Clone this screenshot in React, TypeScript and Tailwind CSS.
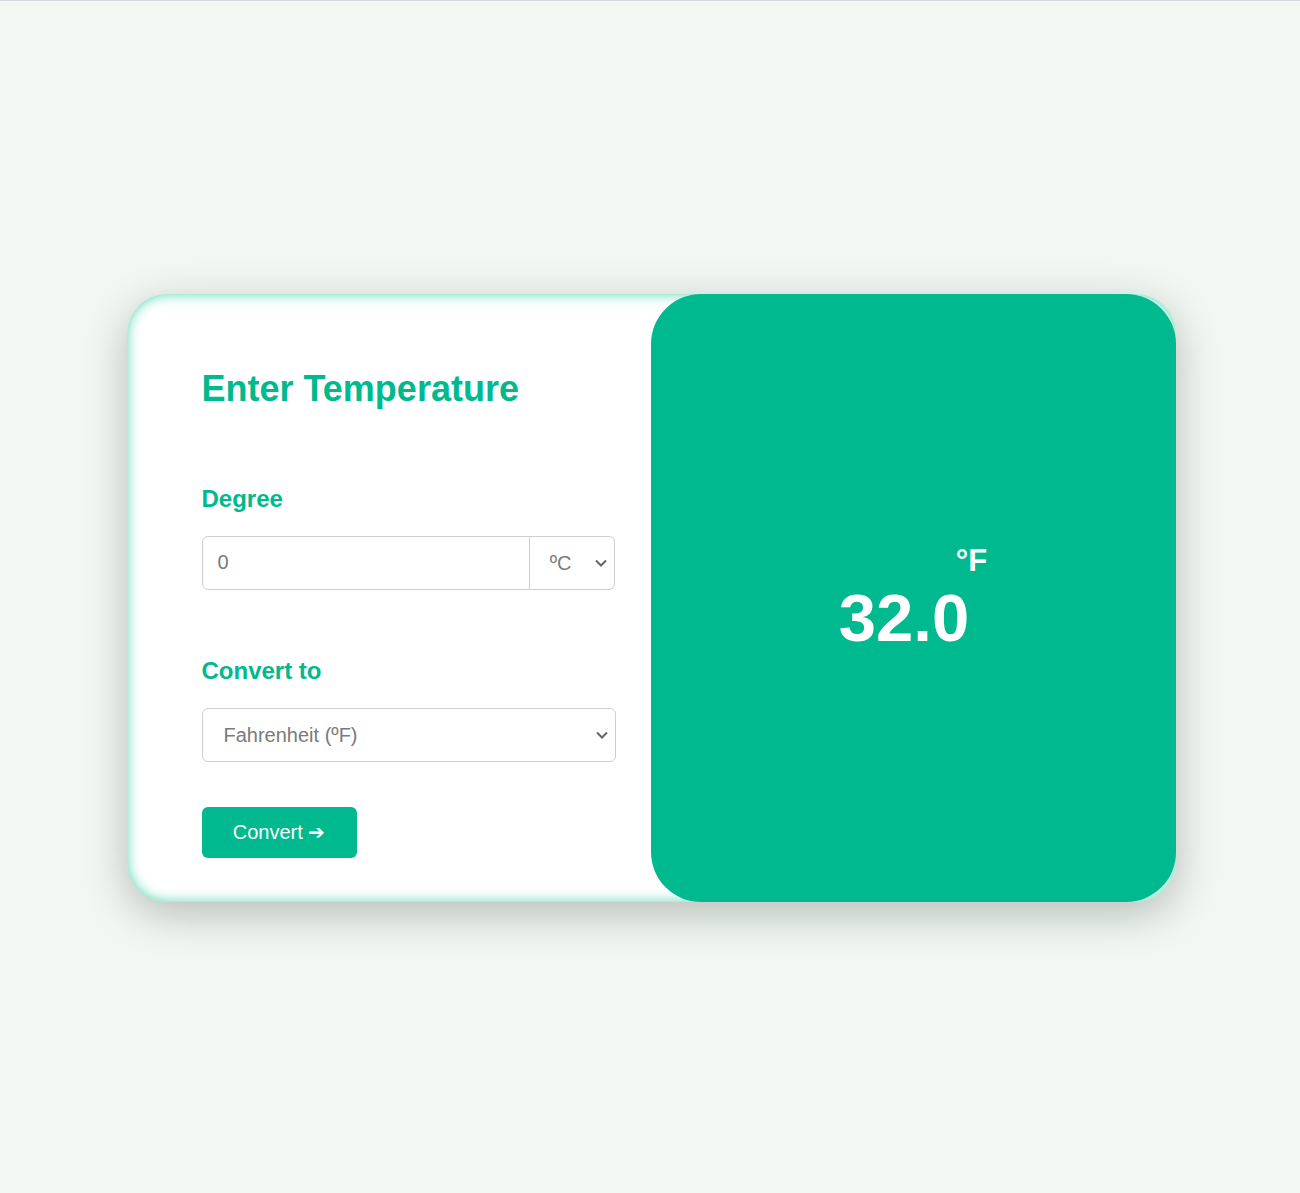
import { useState } from "react";

export default function App() {
  const [degree, setDegree] = useState("0");
  const [from, setFrom] = useState("C");
  const [to, setTo] = useState("F");
  const [result, setResult] = useState("32.0");

  const convert = () => {
    const v = parseFloat(degree) || 0;
    const c = from === "C" ? v : from === "F" ? (v - 32) * 5 / 9 : v - 273.15;
    const out = to === "C" ? c : to === "F" ? c * 9 / 5 + 32 : c + 273.15;
    setResult(out.toFixed(1));
  };

  const unitLabel = to === "C" ? "°C" : to === "F" ? "°F" : "K";

  return (
    <div className="min-h-[1193px] bg-[#f1f7f3] border-t border-[#d3dadd] flex items-center justify-center font-['Liberation_Sans',Arial,sans-serif]">
      <div className="ml-[2px] mt-[1px] w-[1049px] h-[608px] flex rounded-[40px] bg-white shadow-[0_12px_44px_rgba(0,0,0,0.24),inset_0_0_13px_#55d6b0]">
        <div className="w-[524px] pl-[75px] pr-[36px] pt-[73px]">
          <h1 className="text-[36px] font-bold text-[#00b98e] leading-[44px]">Enter Temperature</h1>
          <label className="block mt-[75px] text-[24px] font-bold text-[#00b98e] leading-[26px]">Degree</label>
          <div className="mt-[24px] flex h-[54px]">
            <input value={degree} onChange={(e) => setDegree(e.target.value)}
              className="w-[329px] h-full border border-[#cfcfcf] rounded-l-[6px] px-[15px] text-[20px] text-[#7a7a7a] outline-none" />
            <div className="relative w-[85px] h-full">
              <select value={from} onChange={(e) => setFrom(e.target.value)}
                className="appearance-none w-full h-full border border-l-0 border-[#cfcfcf] rounded-r-[6px] pl-[20px] text-[20px] text-[#7a7a7a] bg-white outline-none">
                <option value="C">ºC</option>
                <option value="F">ºF</option>
                <option value="K">K</option>
              </select>
              <svg className="absolute right-[7px] top-[22px] pointer-events-none" width="14" height="10" viewBox="0 0 14 10" fill="none">
                <path d="M2 2.5 7 7.5 12 2.5" stroke="#666" strokeWidth="2" />
              </svg>
            </div>
          </div>
          <label className="block mt-[68px] text-[24px] font-bold text-[#00b98e] leading-[26px]">Convert to</label>
          <div className="relative mt-[24px] w-[414px] h-[54px]">
            <select value={to} onChange={(e) => setTo(e.target.value)}
              className="appearance-none w-full h-full border border-[#cfcfcf] rounded-[6px] pl-[21px] text-[20px] text-[#7a7a7a] bg-white outline-none">
              <option value="C">Celsius (ºC)</option>
              <option value="F">Fahrenheit (ºF)</option>
              <option value="K">Kelvin (K)</option>
            </select>
            <svg className="absolute right-[7px] top-[22px] pointer-events-none" width="14" height="10" viewBox="0 0 14 10" fill="none">
              <path d="M2 2.5 7 7.5 12 2.5" stroke="#666" strokeWidth="2" />
            </svg>
          </div>
          <button onClick={convert}
            className="mt-[45px] w-[155px] h-[51px] rounded-[6px] bg-[#00b98e] text-white text-[20px]">Convert ➔</button>
        </div>
        <div className="w-[525px] h-full rounded-[50px] bg-[#00b98e] flex items-center justify-center">
          <div className="relative mt-[40px] mr-[18px]">
            <span className="text-[67px] font-bold text-white leading-none">{result}</span>
            <span className="absolute left-[117px] top-[-46px] text-[31px] font-bold text-white">{unitLabel}</span>
          </div>
        </div>
      </div>
    </div>
  );
}
